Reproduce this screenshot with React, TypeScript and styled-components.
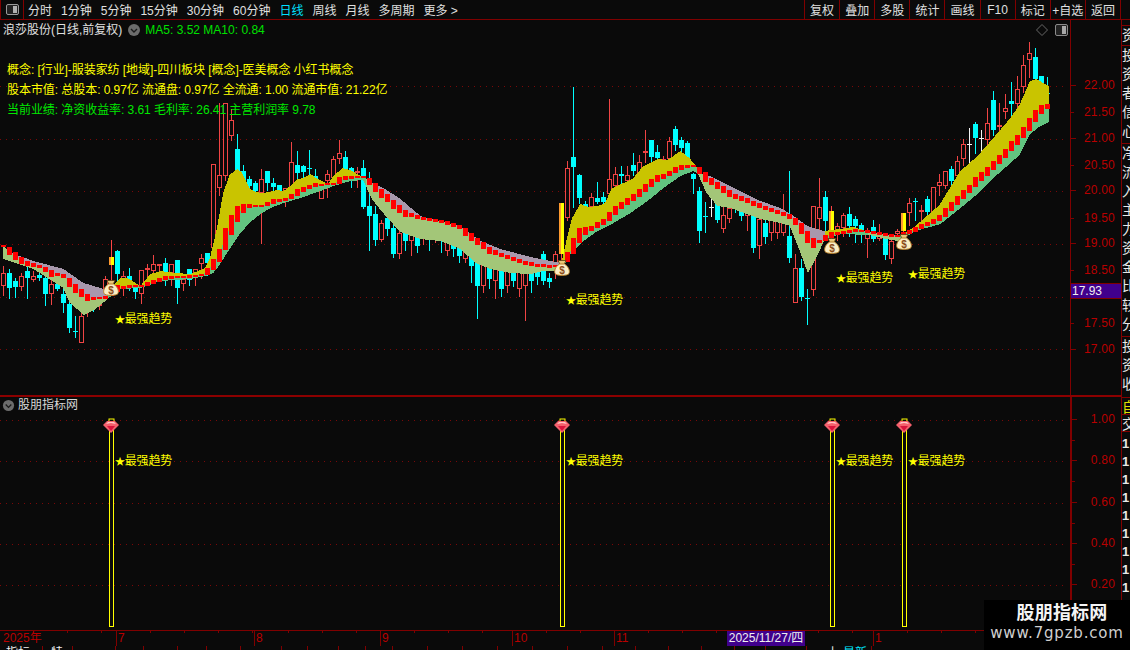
import styled, { createGlobalStyle } from 'styled-components'

const GlobalStyle = createGlobalStyle`
  html, body {
    margin: 0;
    padding: 0;
    background: #0a0a0a;
  }
`

const LINE = '#800000'
const CJK = `"Liberation Sans", "Noto Sans CJK SC", sans-serif`

const Page = styled.div`
  position: relative;
  width: 1130px;
  height: 650px;
  display: flex;
  flex-direction: column;
  overflow: hidden;
  background: #0a0a0a;
  font-family: ${CJK};
  font-size: 12px;
  color: #e0e0e0;
`

/* ---------- toolbar ---------- */

const Toolbar = styled.div`
  height: 19px;
  flex: none;
  display: flex;
  align-items: stretch;
  border-bottom: 1px solid ${LINE};
`

const LayoutToggle = styled.div`
  width: 22px;
  flex: none;
  display: flex;
  align-items: center;
  justify-content: center;
  border-right: 1px solid ${LINE};
  border-left: 1px solid ${LINE};
`

const PeriodRow = styled.div`
  flex: 1;
  display: flex;
  align-items: center;
  column-gap: 9px;
  padding-left: 4px;
`

const Period = styled.span<{ $active?: boolean }>`
  color: ${(p) => (p.$active ? '#00e0ff' : '#e0e0e0')};
  white-space: nowrap;
`

const ToolButtons = styled.div`
  display: flex;
  flex: none;
  width: 316px;
  margin-right: 9px;
  border-right: 1px solid ${LINE};
`

const ToolButton = styled.div`
  flex: 1;
  display: flex;
  align-items: center;
  justify-content: center;
  border-left: 1px solid ${LINE};
  white-space: nowrap;
`

/* ---------- workspace ---------- */

const Workspace = styled.div`
  flex: 1;
  display: flex;
  min-height: 0;
`

const Charts = styled.div`
  width: 1121px;
  flex: none;
  display: flex;
  flex-direction: column;
`

const Pane = styled.div<{ $height: number; $divider?: boolean }>`
  height: ${(p) => p.$height}px;
  flex: none;
  display: flex;
  box-sizing: border-box;
  border-bottom: ${(p) => (p.$divider ? `2px solid #8c0000` : 'none')};
`

const Plot = styled.div`
  position: relative;
  width: 1070px;
  flex: none;
  svg {
    display: block;
  }
`

const TitleRow = styled.div`
  position: absolute;
  top: 3px;
  left: 3px;
  display: flex;
  align-items: center;
  white-space: nowrap;
  line-height: 14px;
`

const StockName = styled.span`
  color: #e0e0e0;
  margin-right: 5px;
`

const MaValues = styled.span`
  color: #00e000;
  margin-left: 4px;
`

const CornerIcons = styled.div`
  position: absolute;
  top: 4px;
  right: 2px;
  display: flex;
  align-items: center;
  column-gap: 7px;
`

const InfoBlock = styled.div`
  position: absolute;
  top: 43px;
  left: 7px;
  display: flex;
  flex-direction: column;
  row-gap: 6px;
  line-height: 14px;
  white-space: nowrap;
  letter-spacing: -0.06px;
`

const InfoLine = styled.div<{ $color: string }>`
  color: ${(p) => p.$color};
`

const PaneTitle = styled.div`
  position: absolute;
  top: 1px;
  left: 2px;
  display: flex;
  align-items: center;
  column-gap: 3px;
  line-height: 14px;
  color: #d8d8d8;
`

const Axis = styled.div<{ $width: number }>`
  position: relative;
  width: 51px;
  flex: none;
  box-sizing: border-box;
  border-left: ${(p) => p.$width}px solid ${LINE};
`

const Tick = styled.i<{ $major?: boolean }>`
  position: absolute;
  left: 0;
  width: ${(p) => (p.$major ? 5 : 3)}px;
  height: 1px;
  background: ${LINE};
`

const AxisLabel = styled.span`
  position: absolute;
  right: 6px;
  line-height: 14px;
  color: #b80000;
  letter-spacing: 0.2px;
`

const LastPrice = styled.div`
  position: absolute;
  top: 263px;
  left: 0;
  right: 0;
  height: 16px;
  box-sizing: border-box;
  border-top: 1px solid ${LINE};
  border-bottom: 1px solid ${LINE};
  background: #40008c;
  color: #f0f0f0;
  line-height: 14px;
  padding-left: 1px;
`

/* ---------- time axis ---------- */

const TimeAxis = styled.div`
  position: relative;
  height: 16px;
  flex: none;
  display: flex;
  border-top: 1px solid ${LINE};
  box-sizing: border-box;
  width: 1121px;
`

const Month = styled.div<{ $width: number; $first?: boolean }>`
  width: ${(p) => p.$width}px;
  flex: none;
  box-sizing: border-box;
  padding-left: ${(p) => (p.$first ? 3 : 1)}px;
  border-left: ${(p) => (p.$first ? 'none' : `1px solid ${LINE}`)};
  color: #b80000;
  line-height: 15px;
  background: repeating-linear-gradient(
      to right,
      transparent 0 33px,
      ${LINE} 33px 34px
    )
    0 0 / 100% 2px no-repeat;
`

const CursorDate = styled.div`
  position: absolute;
  top: 0;
  left: 727px;
  width: 78px;
  height: 15px;
  background: #40008c;
  color: #f0f0f0;
  line-height: 15px;
  text-align: center;
`

const SideStrip = styled.div`
  flex: 1;
  display: flex;
  flex-direction: column;
  border-left: 1px solid ${LINE};
  overflow: hidden;
`

const StripBlock = styled.div<{ $height: number; $color?: string }>`
  height: ${(p) => p.$height}px;
  flex: none;
  box-sizing: border-box;
  border-bottom: 1px solid ${LINE};
  color: ${(p) => p.$color ?? '#e8e8e8'};
  font-size: 14px;
  line-height: 19px;
  width: 14px;
  word-break: break-all;
  overflow: hidden;
`

const StripDigits = styled.div`
  display: flex;
  flex-direction: column;
  row-gap: 4px;
  padding-top: 5px;
  line-height: 14px;
  font-size: 13px;
  font-weight: bold;
  color: #e8e8e8;
`

/* ---------- bottom tabs ---------- */

const BottomTabs = styled.div`
  height: 4px;
  flex: none;
  display: flex;
  overflow: hidden;
`

const BottomTab = styled.div<{ $width: number; $indent?: number }>`
  width: ${(p) => p.$width}px;
  flex: none;
  box-sizing: border-box;
  border-right: 1px solid ${LINE};
  padding-left: ${(p) => p.$indent ?? 6}px;
  line-height: 15px;
  white-space: nowrap;
  color: #f0f0f0;
`

const TabAccent = styled.span`
  margin-left: 4px;
  color: #00e8ff;
`

const Watermark = styled.div`
  position: absolute;
  left: 984px;
  top: 600px;
  width: 146px;
  height: 50px;
  background: #000;
  display: flex;
  flex-direction: column;
  align-items: center;
  padding-top: 2px;
  box-sizing: border-box;
`

const WatermarkTitle = styled.div`
  font-size: 18px;
  line-height: 23px;
  font-weight: bold;
  color: #f4f4f4;
  letter-spacing: 0.2px;
  padding-left: 10px;
`

const WatermarkUrl = styled.div`
  font-size: 15px;
  line-height: 17px;
  font-family: 'DejaVu Sans', sans-serif;
  color: #d0d0d0;
  letter-spacing: 0.8px;
`

/* ---------- chart data (page pixel coordinates) ---------- */

type Pt = [number, number]
type Candle = [number, number, number, number, number, string]

const mainLine: Pt[] = [
  [3, 245], [9, 250], [15, 255], [21, 259], [27, 262], [33, 264], [39, 265], [45, 268], [51, 272], [57, 273],
  [63, 275], [69, 281], [75, 287], [81, 292], [87, 296], [93, 297], [99, 297], [105, 296], [111, 291], [117, 287],
  [123, 286], [129, 285], [141, 285], [147, 283], [153, 281], [159, 279], [165, 277], [171, 276], [183, 276],
  [189, 275], [201, 274], [207, 270], [213, 263], [219, 254], [225, 238], [231, 224], [237, 213], [243, 207],
  [249, 205], [261, 205], [267, 203], [273, 200], [279, 199], [285, 198], [291, 195], [297, 191], [303, 188],
  [309, 186], [315, 184], [333, 183], [339, 179], [345, 177], [351, 176], [363, 176], [369, 180], [375, 186],
  [381, 192], [387, 197], [393, 203], [399, 208], [405, 212], [420, 217], [440, 220], [460, 226], [470, 235],
  [490, 250], [510, 257], [530, 263], [550, 266], [556, 265], [562, 262], [568, 255], [574, 243], [580, 233],
  [586, 229], [592, 227], [598, 223], [604, 220], [610, 214], [616, 208], [622, 204], [628, 200], [634, 196],
  [640, 191], [646, 186], [652, 181], [658, 177], [664, 175], [670, 172], [676, 168], [682, 166], [688, 165],
  [694, 165], [700, 170], [706, 177], [712, 181], [718, 185], [724, 189], [730, 193], [740, 197], [760, 205],
  [783, 213], [790, 216], [796, 221], [802, 229], [808, 237], [814, 243], [820, 240], [826, 236], [832, 233],
  [838, 232], [844, 231], [850, 230], [856, 229], [862, 230], [868, 231], [874, 232], [880, 233], [892, 235],
  [898, 235], [904, 233], [910, 231], [916, 228], [922, 225], [928, 223], [934, 220], [940, 216], [946, 210],
  [952, 204], [958, 198], [965, 191], [971, 186], [977, 179], [983, 174], [989, 168], [995, 162], [1001, 156],
  [1007, 150], [1013, 143], [1019, 137], [1025, 129], [1031, 120], [1037, 112], [1043, 107], [1049, 105],
]

const topLine: Pt[] = [
  [3, 249], [33, 260], [63, 268], [83, 282], [107, 289], [120, 277], [127, 277], [140, 285], [150, 273], [160, 270],
  [175, 272], [190, 273], [205, 267], [210, 257], [217, 227], [223, 193], [230, 173], [237, 168], [242, 172],
  [250, 188], [255, 191], [263, 192], [277, 189], [283, 190], [290, 185], [297, 178], [303, 177], [310, 173],
  [317, 178], [328, 183], [333, 175], [342, 167], [350, 169], [360, 175], [367, 180], [383, 187], [400, 198],
  [420, 215], [440, 220], [460, 225], [480, 240], [500, 248], [530, 256], [555, 261], [562, 260], [567, 237],
  [572, 217], [580, 203], [588, 206], [597, 205], [605, 202], [612, 187], [623, 182], [633, 177], [643, 165],
  [657, 158], [667, 159], [680, 150], [690, 158], [697, 167], [700, 173], [710, 175], [730, 185], [760, 200],
  [780, 207], [793, 215], [807, 225], [823, 230], [840, 228], [853, 226], [863, 229], [868, 232], [883, 233],
  [900, 235], [915, 225], [940, 203], [960, 170], [977, 155], [993, 137], [1010, 117], [1020, 103], [1030, 80],
  [1036, 78], [1048, 85],
]

const bottomLine: Pt[] = [
  [3, 258], [33, 268], [63, 287], [70, 302], [83, 314], [95, 308], [107, 298], [120, 288], [140, 287], [160, 280],
  [190, 278], [205, 275], [213, 272], [220, 263], [230, 247], [240, 232], [250, 221], [260, 213], [270, 207],
  [283, 202], [300, 197], [317, 191], [333, 185], [350, 180], [363, 179], [373, 200], [387, 217], [400, 231],
  [420, 238], [440, 240], [460, 248], [475, 262], [490, 268], [510, 272], [530, 273], [543, 270], [555, 270],
  [563, 267], [570, 253], [583, 240], [597, 230], [613, 222], [630, 212], [647, 200], [663, 187], [680, 175],
  [693, 170], [698, 173], [707, 193], [717, 205], [730, 207], [760, 218], [780, 222], [790, 225], [800, 250],
  [808, 272], [818, 253], [825, 238], [840, 233], [870, 234], [885, 238], [898, 240], [915, 230], [940, 223],
  [960, 207], [977, 193], [993, 177], [1010, 162], [1020, 153], [1030, 133], [1037, 127], [1048, 121],
]

// [x, wick top, body top, body bottom, wick bottom, kind]
const candles: Candle[] = [
  [3, 265, 272, 285, 295, 'r'], [9, 268, 272, 287, 298, 'c'], [15, 277, 280, 286, 297, 'c'], [21, 272, 275, 286, 290, 'r'],
  [27, 262, 270, 277, 298, 'c'], [33, 270, 275, 279, 281, 'r'], [39, 272, 274, 277, 280, 'c'], [45, 270, 277, 293, 305, 'c'],
  [51, 278, 283, 293, 304, 'r'], [57, 278, 283, 288, 290, 'c'], [63, 285, 293, 302, 312, 'c'], [69, 296, 303, 327, 332, 'c'],
  [75, 315, 330, 331, 337, 'c'], [81, 312, 315, 342, 342, 'r'], [87, 300, 305, 310, 316, 'r'], [93, 300, 305, 308, 311, 'c'],
  [99, 298, 300, 305, 309, 'r'], [105, 275, 278, 293, 296, 'r'], [111, 239, 256, 264, 288, 'y'], [117, 249, 250, 273, 280, 'c'],
  [123, 270, 275, 285, 295, 'r'], [129, 267, 275, 283, 290, 'c'], [135, 285, 287, 291, 298, 'c'], [141, 269, 269, 293, 303, 'r'],
  [147, 263, 267, 269, 280, 'r'], [153, 254, 263, 270, 273, 'r'], [159, 263, 263, 265, 280, 'r'], [165, 257, 262, 272, 285, 'c'],
  [171, 263, 263, 272, 285, 'r'], [177, 259, 259, 287, 303, 'c'], [183, 278, 278, 283, 290, 'r'], [189, 268, 268, 279, 285, 'c'],
  [195, 268, 268, 273, 285, 'r'], [201, 253, 257, 263, 278, 'r'], [207, 252, 252, 262, 275, 'c'], [213, 163, 163, 247, 262, 'r'],
  [219, 102, 174, 187, 195, 'r'], [225, 102, 102, 175, 180, 'r'], [231, 108, 119, 135, 140, 'r'], [237, 133, 148, 170, 175, 'c'],
  [243, 164, 170, 180, 190, 'c'], [249, 175, 178, 185, 190, 'c'], [255, 180, 182, 190, 195, 'c'], [261, 168, 178, 192, 243, 'r'],
  [267, 170, 170, 182, 190, 'c'], [273, 177, 182, 186, 190, 'c'], [279, 184, 184, 190, 192, 'c'], [285, 187, 187, 200, 206, 'r'],
  [291, 141, 161, 190, 192, 'r'], [297, 150, 164, 172, 187, 'c'], [303, 164, 165, 171, 182, 'c'], [309, 149, 167, 168, 182, 'c'],
  [315, 168, 175, 178, 186, 'c'], [321, 184, 188, 198, 198, 'r'], [327, 169, 173, 180, 197, 'r'], [333, 155, 158, 177, 180, 'r'],
  [339, 139, 152, 158, 163, 'r'], [345, 150, 156, 168, 170, 'c'], [351, 166, 167, 171, 187, 'c'], [357, 166, 170, 172, 187, 'r'],
  [363, 159, 167, 206, 208, 'c'], [369, 171, 205, 215, 250, 'c'], [375, 205, 213, 239, 245, 'c'], [381, 219, 222, 239, 241, 'r'],
  [387, 210, 217, 228, 235, 'c'], [393, 220, 227, 253, 257, 'c'], [399, 225, 232, 253, 258, 'r'], [405, 218, 225, 240, 250, 'c'],
  [411, 222, 228, 240, 255, 'r'], [417, 222, 228, 245, 252, 'c'], [423, 218, 225, 235, 244, 'r'], [429, 220, 225, 238, 250, 'c'],
  [435, 218, 222, 238, 242, 'r'], [441, 226, 230, 240, 252, 'c'], [447, 230, 235, 250, 255, 'r'], [453, 228, 232, 248, 256, 'c'],
  [459, 232, 235, 255, 262, 'c'], [465, 235, 240, 258, 262, 'r'], [471, 240, 245, 265, 282, 'c'], [477, 250, 255, 285, 318, 'c'],
  [483, 258, 262, 285, 292, 'r'], [489, 252, 258, 278, 288, 'c'], [495, 256, 260, 280, 298, 'r'], [501, 250, 255, 288, 296, 'c'],
  [507, 262, 265, 285, 292, 'r'], [513, 256, 260, 280, 286, 'c'], [519, 264, 268, 288, 296, 'r'], [525, 265, 270, 285, 320, 'r'],
  [531, 262, 266, 280, 292, 'c'], [537, 258, 262, 276, 284, 'c'], [543, 250, 253, 280, 284, 'c'], [549, 272, 277, 281, 287, 'c'],
  [555, 250, 253, 262, 278, 'r'], [561, 202, 202, 253, 262, 'y'], [567, 160, 167, 217, 220, 'r'], [573, 86, 156, 166, 207, 'c'],
  [579, 173, 174, 197, 203, 'c'], [585, 200, 203, 207, 208, 'c'], [591, 192, 196, 206, 208, 'r'], [597, 181, 197, 201, 203, 'c'],
  [603, 191, 196, 201, 204, 'c'], [609, 98, 178, 193, 196, 'r'], [615, 166, 173, 185, 190, 'r'], [621, 165, 173, 175, 183, 'c'],
  [627, 165, 174, 180, 186, 'r'], [633, 152, 164, 170, 175, 'c'], [639, 154, 161, 173, 178, 'r'], [645, 129, 150, 152, 162, 'r'],
  [651, 139, 139, 156, 162, 'c'], [657, 144, 151, 157, 162, 'c'], [663, 155, 158, 163, 170, 'r'], [669, 136, 140, 158, 164, 'r'],
  [675, 125, 128, 144, 150, 'c'], [681, 136, 139, 147, 152, 'c'], [687, 140, 142, 158, 172, 'c'], [693, 172, 173, 178, 193, 'c'],
  [699, 186, 190, 230, 242, 'c'], [705, 201, 215, 216, 232, 'c'], [711, 198, 206, 207, 216, 'w'], [717, 196, 202, 219, 222, 'c'],
  [723, 206, 214, 228, 232, 'r'], [729, 198, 207, 218, 222, 'r'], [735, 190, 195, 205, 212, 'c'], [741, 195, 200, 215, 220, 'c'],
  [747, 200, 205, 215, 230, 'r'], [753, 203, 208, 247, 252, 'c'], [759, 215, 218, 245, 258, 'r'], [765, 218, 222, 236, 243, 'c'],
  [771, 205, 210, 232, 240, 'r'], [777, 215, 218, 232, 238, 'r'], [783, 193, 213, 232, 235, 'r'], [789, 170, 235, 257, 262, 'c'],
  [795, 253, 267, 302, 302, 'r'], [801, 258, 267, 296, 300, 'c'], [807, 288, 297, 298, 324, 'c'], [813, 205, 205, 289, 295, 'r'],
  [819, 177, 206, 218, 232, 'r'], [825, 190, 196, 220, 232, 'c'], [831, 205, 210, 230, 240, 'y'], [837, 222, 225, 230, 240, 'r'],
  [843, 212, 214, 227, 236, 'r'], [849, 206, 213, 225, 236, 'c'], [855, 215, 218, 225, 242, 'c'], [861, 222, 224, 233, 242, 'c'],
  [867, 227, 230, 238, 257, 'r'], [873, 219, 226, 238, 241, 'c'], [879, 223, 235, 238, 240, 'r'], [885, 233, 237, 254, 259, 'c'],
  [891, 235, 240, 258, 263, 'r'], [897, 228, 230, 233, 240, 'r'], [903, 212, 212, 230, 240, 'y'], [909, 197, 202, 212, 225, 'r'],
  [915, 197, 200, 201, 220, 'c'], [921, 204, 209, 210, 225, 'r'], [927, 195, 198, 211, 214, 'c'], [933, 186, 186, 212, 214, 'r'],
  [939, 173, 181, 185, 195, 'r'], [945, 170, 170, 185, 188, 'r'], [951, 165, 168, 180, 186, 'c'], [957, 155, 160, 175, 180, 'r'],
  [963, 138, 143, 158, 165, 'r'], [969, 127, 143, 144, 165, 'w'], [975, 121, 123, 137, 153, 'c'], [981, 129, 137, 138, 150, 'w'],
  [987, 107, 122, 139, 145, 'r'], [993, 90, 99, 129, 135, 'c'], [999, 102, 124, 125, 136, 'r'], [1005, 93, 107, 111, 118, 'r'],
  [1011, 81, 100, 103, 117, 'c'], [1017, 75, 88, 103, 110, 'r'], [1023, 54, 64, 86, 92, 'r'], [1029, 41, 52, 59, 77, 'r'],
  [1035, 47, 56, 78, 82, 'c'], [1041, 75, 75, 83, 92, 'c'], [1047, 76, 92, 93, 100, 'c'],
]

const signals = [
  { x: 111, bagY: 288, labelX: 115, labelY: 322 },
  { x: 562, bagY: 268, labelX: 566, labelY: 303 },
  { x: 832, bagY: 246, labelX: 836, labelY: 281 },
  { x: 904, bagY: 242, labelX: 908, labelY: 277 },
]

// colour of the ribbon changes with trend direction
const ribbons = [
  { from: 3, to: 107, top: '#a898ac', bottom: '#a3c678' },
  { from: 107, to: 366, top: '#c9c400', bottom: '#62c480' },
  { from: 366, to: 560, top: '#a898ac', bottom: '#a3c678' },
  { from: 560, to: 697, top: '#c9c400', bottom: '#62c480' },
  { from: 697, to: 825, top: '#a898ac', bottom: '#a3c678' },
  { from: 825, to: 868, top: '#c9c400', bottom: '#62c480' },
  { from: 868, to: 900, top: '#a898ac', bottom: '#a3c678' },
  { from: 900, to: 1049, top: '#c9c400', bottom: '#62c480' },
]

const at = (pts: Pt[], x: number) => {
  if (x <= pts[0][0]) return pts[0][1]
  for (let i = 1; i < pts.length; i++) {
    if (x <= pts[i][0]) {
      const [x0, y0] = pts[i - 1]
      const [x1, y1] = pts[i]
      return y0 + ((y1 - y0) * (x - x0)) / (x1 - x0)
    }
  }
  return pts[pts.length - 1][1]
}

const band = (from: number, to: number, upper: (x: number) => number, lower: (x: number) => number) => {
  const head: string[] = []
  const tail: string[] = []
  for (let x = from; x <= to; x++) {
    head.push(`${x},${Math.round(upper(x))}`)
    tail.unshift(`${x},${Math.round(lower(x))}`)
  }
  return [...head, ...tail].join(' ')
}

const priceGrid = [85, 138, 190, 243, 296, 348]
const indicatorGrid = [419, 460, 502, 543, 584]

const priceTicks = [
  { y: 85, label: '22.00', major: true }, { y: 112, label: '21.50' }, { y: 138, label: '21.00', major: true },
  { y: 165, label: '20.50' }, { y: 190, label: '20.00', major: true }, { y: 218, label: '19.50' },
  { y: 243, label: '19.00', major: true }, { y: 270, label: '18.50' }, { y: 323, label: '17.50' },
  { y: 349, label: '17.00', major: true },
]

const indicatorTicks = [
  { y: 419, label: '1.00' }, { y: 460, label: '0.80' }, { y: 502, label: '0.60' },
  { y: 543, label: '0.40' }, { y: 584, label: '0.20' },
]

const periods = ['分时', '1分钟', '5分钟', '15分钟', '30分钟', '60分钟', '日线', '周线', '月线', '多周期', '更多 >']
const tools = ['复权', '叠加', '多股', '统计', '画线', 'F10', '标记', '+自选', '返回']
const months = [
  { label: '2025年', width: 116 }, { label: '7', width: 138 }, { label: '8', width: 126 }, { label: '9', width: 132 },
  { label: '10', width: 102 }, { label: '11', width: 259 }, { label: '1', width: 197 },
]
const tabWidths = [43, 30, 43, 28, 34, 29, 34, 41, 26, 31, 27, 27, 35, 35, 35, 35, 35, 35, 33, 33, 33, 33, 31, 41]

const ChevronBadge = ({ cx, cy }: { cx: number; cy: number }) => (
  <g>
    <circle cx={cx} cy={cy} r={6} fill="#6c6c6c" />
    <polyline points={`${cx - 3},${cy - 1} ${cx},${cy + 2} ${cx + 3},${cy - 1}`} fill="none" stroke="#1a1a1a" strokeWidth={1.4} />
  </g>
)

const MoneyBag = ({ x, y }: { x: number; y: number }) => (
  <g transform={`translate(${x} ${y})`}>
    <path d="M-4,-8.5 L4,-8.5 L2,-4.5 L-2,-4.5 Z" fill="#e8c878" stroke="#5a3c10" strokeWidth={0.8} />
    <path d="M-2.5,-5 C-7,-2 -8,2 -7,4.5 C-6,7 6,7 7,4.5 C8,2 7,-2 2.5,-5 Z" fill="#fbeec4" stroke="#b9802c" strokeWidth={1} />
    <text x={0} y={5} textAnchor="middle" fontSize={10} fontWeight="bold" fontFamily="Liberation Sans" fill="#8a4a18">
      $
    </text>
  </g>
)

const Gem = ({ x }: { x: number }) => (
  <g transform={`translate(${x} 424)`}>
    <rect x={-2} y={-6} width={5} height={5} fill="none" stroke="#ffff00" />
    <polygon points="-8,0 -4,-4 4,-4 8,0 0,8" fill="#f4606c" />
    <polygon points="-5,-1 -3,-3 3,-3 5,-1 0,-2" fill="#ffc8c8" />
    <polygon points="-4,1 4,1 0,6" fill="#d8143c" />
  </g>
)

const SignalLabel = ({ x, y }: { x: number; y: number }) => (
  <text x={x} y={y} fontSize={12} letterSpacing={-0.2} fontFamily={CJK} fill="#ffff00">
    <tspan fontSize={10}>★</tspan>最强趋势
  </text>
)

const PriceChart = () => (
  <svg width={1070} height={377} viewBox="0 19 1070 377">
    {priceGrid.map((y) => (
      <line key={y} x1={0} x2={1068} y1={y + 0.5} y2={y + 0.5} stroke="#7a0808" strokeDasharray="1 5" />
    ))}
    <g shapeRendering="crispEdges">
      {candles.map(([x, wt, bt, bb, wb, kind]) => {
        if (kind === 'y') {
          return (
            <g key={x}>
              <rect x={x} y={wt} width={1} height={wb - wt} fill="#ff4444" />
              <rect x={x - 2} y={bt} width={2} height={bb - bt} fill="#ff9a30" />
              <rect x={x} y={bt} width={3} height={bb - bt} fill="#ffff00" />
            </g>
          )
        }
        const color = kind === 'r' ? '#f04444' : kind === 'c' ? '#00ffff' : '#f4f4f4'
        return (
          <g key={x}>
            <rect x={x} y={wt} width={1} height={bt - wt} fill={color} />
            <rect x={x} y={bb} width={1} height={wb - bb} fill={color} />
            {kind === 'r' ? (
              <rect x={x - 1.5} y={bt + 0.5} width={4} height={Math.max(bb - bt - 1, 1)} fill="none" stroke={color} />
            ) : (
              <rect x={x - 2} y={bt} width={5} height={Math.max(bb - bt, 1)} fill={color} />
            )}
          </g>
        )
      })}
      {ribbons.map((r) => (
        <g key={r.from}>
          <polygon
            points={band(r.from, r.to, (x) => Math.min(at(topLine, x), at(mainLine, x)), (x) => at(mainLine, x))}
            fill={r.top}
          />
          <polygon
            points={band(r.from, r.to, (x) => at(mainLine, x), (x) => Math.max(at(bottomLine, x), at(mainLine, x)))}
            fill={r.bottom}
          />
        </g>
      ))}
      {Array.from({ length: 175 }, (_, i) => {
        const x = 3 + i * 6
        const y = at(mainLine, x)
        const h = Math.max(2, Math.round(Math.abs(y - at(mainLine, x - 6)) * 1.3 + 1.5))
        return <rect key={x} x={x - 2} y={Math.round(y - h / 2)} width={5} height={h} fill="#ff0000" />
      })}
    </g>
    {signals.map((s) => (
      <g key={s.x}>
        <MoneyBag x={s.x} y={s.bagY} />
        <SignalLabel x={s.labelX} y={s.labelY} />
      </g>
    ))}
  </svg>
)

const IndicatorChart = () => (
  <svg width={1070} height={231} viewBox="0 396 1070 231">
    {indicatorGrid.map((y) => (
      <line key={y} x1={0} x2={1068} y1={y + 0.5} y2={y + 0.5} stroke="#7a0808" strokeDasharray="1 5" />
    ))}
    {signals.map((s) => (
      <g key={s.x}>
        <rect x={s.x - 1.5} y={420.5} width={4} height={205} fill="none" stroke="#ffff00" shapeRendering="crispEdges" />
        <Gem x={s.x} />
        <SignalLabel x={s.labelX} y={464} />
      </g>
    ))}
  </svg>
)

function App() {
  return (
    <Page>
      <GlobalStyle />
      <Toolbar>
        <LayoutToggle>
          <svg width={13} height={11} viewBox="0 0 13 11">
            <rect x={0.5} y={0.5} width={12} height={10} rx={1.5} fill="#222" stroke="#9a9a9a" />
            <rect x={7} y={2} width={4} height={7} fill="#b0b0b0" />
          </svg>
        </LayoutToggle>
        <PeriodRow>
          {periods.map((p) => (
            <Period key={p} $active={p === '日线'}>
              {p}
            </Period>
          ))}
        </PeriodRow>
        <ToolButtons>
          {tools.map((t) => (
            <ToolButton key={t}>{t}</ToolButton>
          ))}
        </ToolButtons>
      </Toolbar>

      <Workspace>
        <Charts>
          <Pane $height={377} $divider>
            <Plot>
              <PriceChart />
              <TitleRow>
                <StockName>浪莎股份(日线,前复权)</StockName>
                <svg width={14} height={14} viewBox="0 0 14 14">
                  <ChevronBadge cx={7} cy={7} />
                </svg>
                <MaValues>MA5: 3.52 MA10: 0.84</MaValues>
              </TitleRow>
              <CornerIcons>
                <svg width={12} height={12} viewBox="0 0 12 12">
                  <polygon points="6,0.5 11.5,6 6,11.5 0.5,6" fill="none" stroke="#666" />
                </svg>
                <svg width={13} height={12} viewBox="0 0 13 12">
                  <rect x={0.5} y={0.5} width={12} height={11} rx={1.5} fill="#222" stroke="#8a8a8a" />
                  <rect x={7} y={2} width={4} height={8} fill="#a8a8a8" />
                </svg>
              </CornerIcons>
              <InfoBlock>
                <InfoLine $color="#ffff00">概念: [行业]-服装家纺 [地域]-四川板块 [概念]-医美概念 小红书概念</InfoLine>
                <InfoLine $color="#ffff00">股本市值: 总股本: 0.97亿 流通盘: 0.97亿 全流通: 1.00 流通市值: 21.22亿</InfoLine>
                <InfoLine $color="#00e800">当前业绩: 净资收益率: 3.61 毛利率: 26.41 主营利润率 9.78</InfoLine>
              </InfoBlock>
            </Plot>
            <Axis $width={1}>
              {priceTicks.map((t) => (
                <Tick key={t.y} $major={t.major} style={{ top: t.y - 20 }} />
              ))}
              {priceTicks.map((t) => (
                <AxisLabel key={t.label} style={{ top: t.y - 27 }}>
                  {t.label}
                </AxisLabel>
              ))}
              <LastPrice>17.93</LastPrice>
            </Axis>
          </Pane>
          <Pane $height={233}>
            <Plot>
              <IndicatorChart />
              <PaneTitle>
                <svg width={13} height={13} viewBox="0 0 14 14">
                  <ChevronBadge cx={7} cy={7} />
                </svg>
                股朋指标网
              </PaneTitle>
            </Plot>
            <Axis $width={2}>
              {indicatorTicks.map((t) => (
                <Tick key={t.y} $major style={{ top: t.y - 397 }} />
              ))}
              {indicatorTicks.map((t) => (
                <Tick key={t.y + 20} style={{ top: t.y - 376 }} />
              ))}
              {indicatorTicks.map((t) => (
                <AxisLabel key={t.label} style={{ top: t.y - 404 }}>
                  {t.label}
                </AxisLabel>
              ))}
            </Axis>
          </Pane>
          <TimeAxis>
            {months.map((m, i) => (
              <Month key={m.label + i} $width={m.width} $first={i === 0}>
                {m.label}
              </Month>
            ))}
            <CursorDate>2025/11/27/四</CursorDate>
          </TimeAxis>
        </Charts>
        <SideStrip>
          <StripBlock $height={6} />
          <StripBlock $height={20}>资</StripBlock>
          <StripBlock $height={98}>投资者信心指数</StripBlock>
          <StripBlock $height={193}>净流入主力资金比较分析持续流向</StripBlock>
          <StripBlock $height={61}>投资收</StripBlock>
          <StripBlock $height={17} $color="#e0e000">自</StripBlock>
          <StripBlock $height={17}>交</StripBlock>
          <StripDigits>
            {Array.from({ length: 11 }, (_, i) => (
              <span key={i}>1</span>
            ))}
          </StripDigits>
        </SideStrip>
      </Workspace>

      <BottomTabs>
        <BottomTab $width={43}>指标</BottomTab>
        <BottomTab $width={30} $indent={8}>特</BottomTab>
        {tabWidths.slice(2).map((w, i) => (
          <BottomTab key={i} $width={w} />
        ))}
        <BottomTab $width={65} $indent={20}>
          上<TabAccent>最新</TabAccent>
        </BottomTab>
      </BottomTabs>

      <Watermark>
        <WatermarkTitle>股朋指标网</WatermarkTitle>
        <WatermarkUrl>www.7gpzb.com</WatermarkUrl>
      </Watermark>
    </Page>
  )
}

export default App
